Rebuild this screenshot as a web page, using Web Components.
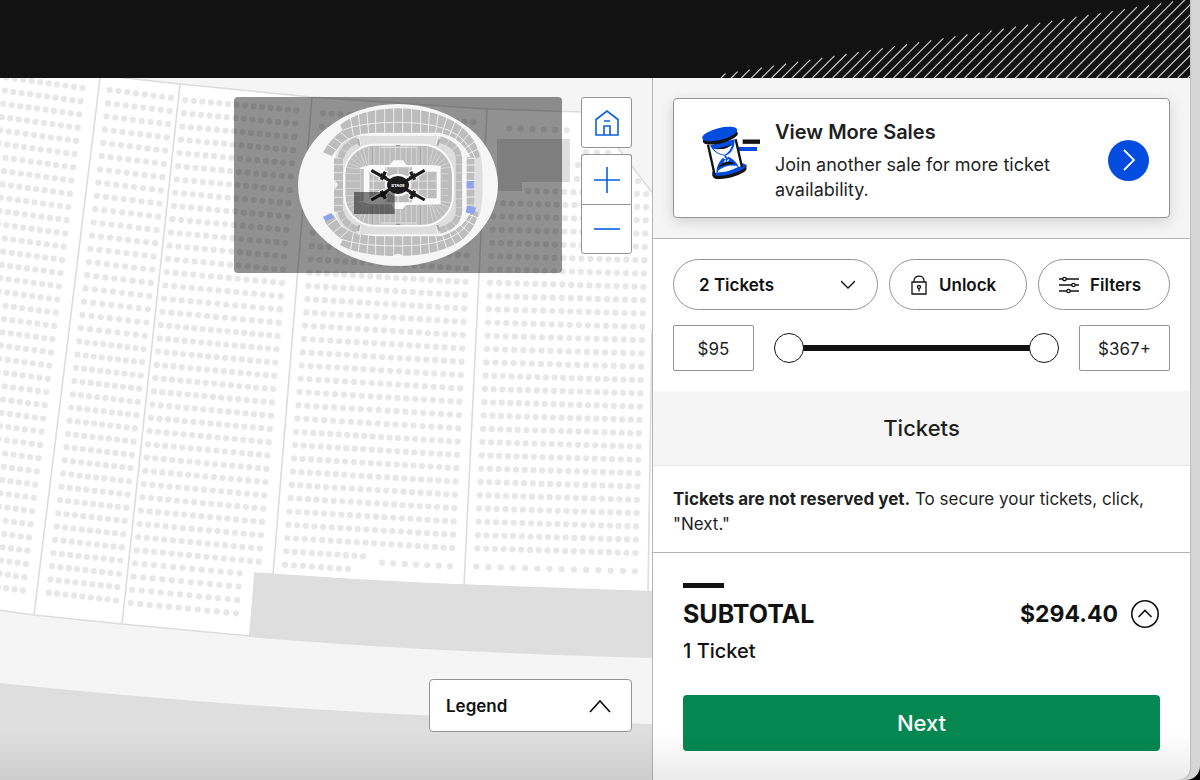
<!DOCTYPE html>
<html lang="en">
<head>
<meta charset="utf-8">
<meta name="viewport" content="width=device-width, initial-scale=1">
<title>Tickets</title>
<style>
    html {
        background: #000;
    }

    body {
        margin: 0;
        font-family: Inter, "Liberation Sans", sans-serif;
        color: #1f1f1f;
        --ink: #121212;
        --line: #949494;
        --blue: #024ddf;
        --green: #048851;
        --soft: #f5f5f5;
    }
</style>
</head>
<body>
<ticket-page>
    <page-banner slot="banner"></page-banner>
    <seat-map slot="map">
        <mini-map slot="overview"></mini-map>
        <zoom-controls slot="controls"></zoom-controls>
        <legend-toggle slot="legend">Legend</legend-toggle>
    </seat-map>
    <promo-card slot="side" heading="View More Sales">Join another sale for more ticket availability.</promo-card>
    <filter-bar slot="side"></filter-bar>
    <section-title slot="side">Tickets</section-title>
    <reserve-notice slot="side"><strong>Tickets are not reserved yet.</strong> To secure your tickets, click, "Next."</reserve-notice>
    <order-summary slot="side" total="$294.40" count="1 Ticket"></order-summary>
</ticket-page>

<script>
// Shared base: attaches an open shadow root and fills it
class BaseElement extends HTMLElement {
    constructor() {
        super();
        this.attachShadow({ mode: 'open' });
    }

    connectedCallback() {
        this.shadowRoot.innerHTML = `
            <style>
                :host { display: block; box-sizing: border-box; }
                *, *::before { box-sizing: border-box; }
                button, input, select { font: inherit; color: inherit; margin: 0; }
                button { cursor: pointer; }
                svg { display: block; }
            </style>
            ${this.render()}
        `;
    }
}

// Page frame: banner on top, map and side panel below
class TicketPage extends BaseElement {
    render() {
        return `
            <style>
                :host {
                    min-height: 100vh;
                    padding-right: 10px;
                    background: #d6d6d6;
                    border-radius: 0 0 14px 0;
                    display: flex;
                    overflow: hidden;
                }
                .window {
                    flex: 1;
                    display: flex;
                    flex-direction: column;
                    position: relative;
                    background: #fff;
                    border-radius: 0 0 12px 0;
                    overflow: hidden;
                    box-shadow: 0 0 2px #888;
                }
                .window::after {
                    content: "";
                    position: absolute;
                    inset: auto 0 0 0;
                    height: 48px;
                    background: linear-gradient(transparent, rgba(0, 0, 0, .08));
                    pointer-events: none;
                }
                main {
                    flex: 1;
                    display: grid;
                    grid-template-columns: minmax(0, 1fr) 537px;
                }
                .map { display: grid; border-right: 1px solid #b4b4b4; }
                aside { display: flex; flex-direction: column; }
            </style>
            <div class="window">
                <slot name="banner"></slot>
                <main>
                    <div class="map"><slot name="map"></slot></div>
                    <aside><slot name="side"></slot></aside>
                </main>
            </div>
        `;
    }
}
customElements.define('ticket-page', TicketPage);

// Dark banner with a wedge of diagonal lines
class PageBanner extends BaseElement {
    render() {
        let d = '';
        for (let i = 0; i < 48; i++) {
            const x = 11 + i * 10.15;
            const len = 4.5 + i * 1.95;
            d += `M${x} 78l${len} ${-len}`;
        }
        return `
            <style>
                :host { background: var(--ink); height: 78px; }
                svg { margin-left: auto; }
            </style>
            <svg width="480" height="78" viewBox="0 0 480 78" aria-hidden="true">
                <path d="${d}" stroke="#c8c8c8" stroke-width="1.2"/>
            </svg>
        `;
    }
}
customElements.define('page-banner', PageBanner);

// Seat blocks: first and last row as [left x, y, right x, y], seats per row at both ends
const BLOCKS = [
    { first: [-10.6, 75, 82.4, 88], last: [-68, 578, 22.7, 590.3], rows: 39, seats: [12, 12] },
    { first: [109.7, 90, 171, 97.7], last: [48.7, 592.7, 116, 600.3], rows: 39, seats: [8, 9] },
    { first: [185.3, 100, 296.3, 110.3], last: [136.7, 550.3, 258.7, 561.7], rows: 35, seats: [14, 15] },
    { first: [135, 563.3, 239.7, 573.3], last: [130.7, 603, 236, 613.3], rows: 4, seats: [12, 12] },
    { first: [323, 113.3, 473.3, 122.3], last: [287.3, 538, 452.3, 548], rows: 33, seats: [18, 20] },
    { first: [286.3, 551.3, 363, 556.3], last: [285, 564.7, 348, 569], rows: 2, seats: [10, 8] },
    { first: [382, 562.7, 450, 566.3], last: [382, 562.7, 450, 566.3], rows: 1, seats: [7, 7] },
    { first: [509.3, 128.3, 566.7, 130.3], last: [509.3, 128.3, 566.7, 130.3], rows: 1, seats: [6, 6] },
    { first: [586, 152, 608, 153], last: [578, 165, 622, 167], rows: 2, seats: [3, 6] },
    { first: [577, 179, 638, 181], last: [528, 191, 646, 194], rows: 2, seats: [8, 14] },
    { first: [494, 203, 646, 207], last: [477.3, 548.3, 635.3, 553], rows: 27, seats: [18, 19] },
    { first: [476.3, 566.7, 635, 571.3], last: [476.3, 566.7, 635, 571.3], rows: 1, seats: [14, 14] }
];

function drawSeats() {
    const mix = (a, b, t) => a + (b - a) * t;
    let out = '';
    BLOCKS.forEach(({ first, last, rows, seats }) => {
        for (let r = 0; r < rows; r++) {
            const t = rows > 1 ? r / (rows - 1) : 0;
            const [x1, y1, x2, y2] = first.map((v, i) => mix(v, last[i], t));
            const n = Math.round(mix(seats[0], seats[1], t));
            for (let s = 0; s < n; s++) {
                const k = s / (n - 1);
                out += `<circle cx="${mix(x1, x2, k).toFixed(1)}" cy="${mix(y1, y2, k).toFixed(1)}" r="3.1"/>`;
            }
        }
    });
    return out;
}

// Zoomed-in map with its floating controls
class SeatMap extends BaseElement {
    render() {
        return `
            <style>
                :host { position: relative; overflow: hidden; background: var(--soft); }
                .canvas { position: absolute; inset: 0; width: 100%; height: 100%; }
                .tools {
                    position: absolute;
                    top: 19px;
                    right: 20px;
                    display: flex;
                    align-items: flex-start;
                    gap: 19px;
                }
                .legend { position: absolute; right: 20px; bottom: 48px; }
            </style>
            <svg class="canvas" viewBox="0 78 652 702" preserveAspectRatio="xMinYMin slice" role="img" aria-label="Seat map">
                <path d="M-9 60L125 78L180 84L311 97L487 109L583 112L600 120L618 148L660 203V592L400 583L255 573L250 636L122 624L34 615L-9 609Z" fill="#fff" stroke="#dcdcdc" stroke-width="1.6"/>
                <path d="M100 78L34 615M180 84L122 624M312 97L273 574M487 109L464 586M652 330L648 592" stroke="#dcdcdc" stroke-width="1.6" fill="none"/>
                <path d="M255 573Q400 583 653 592V658Q430 652 249 637Z" fill="#dedede"/>
                <path d="M0 683Q300 715 653 724V780H0Z" fill="#dedede"/>
                <path d="M497 139H570V182H522V191H497Z" fill="#dedede"/>
                <g fill="#e7e7e7">${drawSeats()}</g>
            </svg>
            <div class="tools">
                <slot name="overview"></slot>
                <slot name="controls"></slot>
            </div>
            <div class="legend"><slot name="legend"></slot></div>
        `;
    }
}
customElements.define('seat-map', SeatMap);

// Overview of the whole stadium, with the visible area marked
class MiniMap extends BaseElement {
    // lines between the lower-bowl sections, from the floor out to the rim
    sections() {
        let d = '';
        for (let x = 236; x <= 412; x += 16) {
            d += `M${x} 145V212M${x} 325V395`;
        }
        for (let i = 0; i < 6; i++) {
            const a = i * 15;
            d += `M${232 - i * 4} ${212 + i * 2}L${215 - i * 13} ${140 + a}`;
            d += `M${232 - i * 4} ${328 - i * 2}L${215 - i * 13} ${400 - a}`;
            d += `M${418 + i * 5} ${212 + i * 2}L${434 + i * 12} ${140 + a}`;
            d += `M${418 + i * 5} ${328 - i * 2}L${434 + i * 12} ${400 - a}`;
        }
        for (let y = 236; y <= 310; y += 22) {
            d += `M160 ${y}H212M455 ${y}H490`;
        }
        return d;
    }

    render() {
        return `
            <style>
                :host { width: 328px; height: 176px; background: rgba(0, 0, 0, .43); border-radius: 4px; }
                text { font: 800 12px Inter, sans-serif; fill: #fff; }
            </style>
            <svg width="328" height="176" viewBox="-168 6 984 528" fill="none" role="img" aria-label="Stadium overview">
                <defs><clipPath id="bowl"><rect x="166" y="153" width="319" height="236" rx="88"/></clipPath></defs>
                <ellipse cx="324" cy="270" rx="300" ry="243" fill="#f6f6f6"/>
                <path d="M553 172H570Q578 200 578 270T566 366H553Z" fill="#dedede"/>
                <path d="M150 90Q210 42 324 40Q450 42 520 100Q560 136 570 185L546 196Q520 130 450 113H260Q190 113 155 145L125 183L99 172Q124 128 158 106Z" fill="#bdbdbd"/>
                <path d="M150 450Q210 483 324 483Q450 483 520 432Q556 400 566 352L546 344Q520 405 450 424H260Q190 420 155 395L128 358L104 380Q128 415 158 434Z" fill="#bdbdbd"/>
                <path d="M530 186H553V354H530Z" fill="#bdbdbd"/>
                <g stroke="#f6f6f6" stroke-width="2.500">
                    <path d="M158 106Q210 82 324 82Q450 82 505 122Q540 150 556 190M158 434Q210 453 324 453Q450 453 505 415Q540 385 556 345"/>
                    <path d="M204 50L212 118M230 42L236 116M257 38V116M284 36V116M311 36V116M338 36V116M365 36V116M392 38V116M419 42L414 116M446 50L436 118M472 64L454 124M496 78L474 132M518 96L490 142M538 116L504 154M556 138L516 168M568 160L524 182"/>
                    <path d="M180 60L190 122M126 124L162 150M112 148L142 168M142 104L178 134"/>
                    <path d="M204 478L212 418M230 484L236 420M257 486V420M284 488V420M311 488V420M338 488V420M365 488V420M392 486V420M419 484L414 420M446 476L436 418M472 464L454 412M496 450L474 404M518 434L490 396M538 414L504 384M556 392L516 370M568 370L524 354"/>
                    <path d="M180 474L190 414M126 416L162 388M112 392L142 370M142 436L178 404"/>
                    <path d="M526 190H556M526 210H556M526 232H556M526 256H556M526 282H556M526 306H556M526 330H556"/>
                </g>
                <rect x="129" y="116" width="396" height="307" rx="130" fill="#fafafa"/>
                <path d="M132 190H160V350H132Z" fill="#bdbdbd"/>
                <path d="M130 209H160M130 233H160M130 257H160M130 283H160M130 307H160M130 331H160" stroke="#f6f6f6" stroke-width="2"/>
                <path d="M136 188Q146 134 206 122H442Q504 134 516 190V350Q504 406 442 418H206Q146 406 136 352H162V188Z" fill="#dedede"/>
                <path d="M202 136C176 145 158 162 152 190M152 350C158 376 176 394 202 404M450 134C490 145 507 165 507 195V345C507 375 490 395 450 406" stroke="#bdbdbd" stroke-width="19" stroke-dasharray="24 2"/>
                <path d="M206 119L212 150M444 119L438 150M206 421L212 392M444 421L438 392" stroke="#f6f6f6" stroke-width="3"/>
                <path d="M204 132L208 152M448 132L442 152M204 408L208 390M448 408L442 390" stroke="#aaa" stroke-width="6"/>
                <rect x="163" y="149" width="326" height="243" rx="92" fill="#bdbdbd" stroke="#fbfbfb" stroke-width="6"/>
                <g clip-path="url(#bowl)">
                    <path d="${this.sections()}" stroke="#e9e9e9" stroke-width="1.6"/>
                    <path d="M272 157H378M272 384H378" stroke="#e4e4e4" stroke-width="3"/>
                    <path d="M248 152V208M392 152V208M248 332V390M392 332V390" stroke="#a9a9a9" stroke-width="3"/>
                </g>
                <path d="M317 152H331M317 388H331" stroke="#8d8d8d" stroke-width="3"/>
                <path d="M210 218L240 210H300L310 196H340L348 210H420L452 212V328L348 330L338 342H312L304 328H240L210 318Z" fill="#fafafa"/>
                <path d="M211 222H221V318H211ZM474 234H483V306H474Z" fill="#bdbdbd"/>
                <path d="M238 232H286V217H366V230H440V310H366V322H286V308H238Z" fill="#bdbdbd"/>
                <path d="M250 232V308M290 217V322M324 217V322M358 217V322M386 230V310M412 230V310M238 258H440M238 283H440" stroke="#f6f6f6" stroke-width="2"/>
                <g stroke="#fafafa" stroke-width="17">
                    <path d="M243 226L300 256M404 226L346 256M243 315L300 284M404 315L346 284"/>
                    <path d="M286 226L272 256M362 226L376 256M286 315L272 285M362 315L376 285"/>
                </g>
                <ellipse cx="324" cy="270" rx="40" ry="34" fill="#fafafa"/>
                <g stroke="#1c1c1c">
                    <path d="M244 226L304 260M404 226L344 260M244 315L304 281M404 315L344 281" stroke-width="9"/>
                    <path d="M286 230L274 254M362 230L374 254M286 311L274 287M362 311L374 287" stroke-width="10"/>
                    <path d="M272 237L290 249M376 237L358 249M272 304L290 292M376 304L358 292" stroke-width="8"/>
                </g>
                <ellipse cx="324" cy="270" rx="33" ry="27" fill="#1c1c1c"/>
                <text x="324" y="275" text-anchor="middle">STAGE</text>
                <g fill="#8ea2ee">
                    <path d="M530 258H552L549 269L553 280H530Z"/>
                    <path d="M532 332L558 338L552 359L527 352Z"/>
                    <path d="M99 365L124 354L131 368L106 379Z"/>
                </g>
                <path d="M134 258Q150 270 134 280ZM310 483Q324 472 340 483Z" fill="#ececec" stroke="#fff" stroke-width="2"/>
                <rect x="192" y="291" width="122" height="66" fill="#000" fill-opacity=".48"/>
            </svg>
        `;
    }
}
customElements.define('mini-map', MiniMap);

// Home, zoom in, zoom out
class ZoomControls extends BaseElement {
    render() {
        return `
            <style>
                :host { display: flex; flex-direction: column; gap: 6px; }
                button {
                    width: 51px;
                    height: 51px;
                    padding: 0;
                    display: grid;
                    place-items: center;
                    background: #fff;
                    border: 1px solid var(--line);
                    border-radius: 3px;
                }
                .pair button { height: 50px; }
                .pair button:first-child { border-radius: 3px 3px 0 0; border-bottom: 0; }
                .pair button:last-child { border-radius: 0 0 3px 3px; }
                svg { stroke: #0a5fdc; stroke-width: 1.6; fill: none; }
            </style>
            <button aria-label="Reset map">
                <svg width="26" height="28" viewBox="0 0 26 28"><path d="M2 10.500L13 2L24 10.500V26H2ZM10 26V17H16V26M10 12H16"/></svg>
            </button>
            <div class="pair">
                <button aria-label="Zoom in"><svg width="26" height="26" viewBox="0 0 26 26"><path d="M0 13H26M13 0V26"/></svg></button>
                <button aria-label="Zoom out"><svg width="26" height="26" viewBox="0 0 26 26"><path d="M0 13H26"/></svg></button>
            </div>
        `;
    }
}
customElements.define('zoom-controls', ZoomControls);

class LegendToggle extends BaseElement {
    render() {
        return `
            <style>
                button {
                    width: 203px;
                    height: 53px;
                    padding: 0 20px 0 16px;
                    display: flex;
                    align-items: center;
                    justify-content: space-between;
                    background: #fff;
                    color: var(--ink);
                    border: 1px solid var(--line);
                    border-radius: 4px;
                    font-size: 17px;
                    font-weight: 600;
                }
            </style>
            <button aria-expanded="false">
                <slot></slot>
                <svg width="22" height="14" viewBox="0 0 22 14" fill="none" stroke="#121212" stroke-width="1.700"><path d="M1 13L11 2L21 13"/></svg>
            </button>
        `;
    }
}
customElements.define('legend-toggle', LegendToggle);

// Promo card linking to the other sales
class PromoCard extends BaseElement {
    render() {
        return `
            <style>
                :host { padding: 20px; background: var(--soft); border-bottom: 1px solid #b4b4b4; }
                .card {
                    min-height: 120px;
                    padding: 18px 20px 14px 28px;
                    display: flex;
                    align-items: center;
                    gap: 15px;
                    background: #fff;
                    border: 1px solid var(--line);
                    border-radius: 4px;
                    box-shadow: 0 4px 14px rgba(0, 0, 0, .14);
                }
                .text { flex: 1; }
                h2 { margin: 0 0 6px; font-size: 20px; line-height: 28px; font-weight: 600; }
                p { margin: 0; font-size: 18px; line-height: 25px; max-width: 290px; }
                a {
                    width: 41px;
                    height: 41px;
                    display: grid;
                    place-items: center;
                    border-radius: 50%;
                    background: var(--blue);
                }
            </style>
            <div class="card">
                <svg width="58" height="76" viewBox="18 6 174 228" aria-hidden="true">
                    <path d="M140 65H192" stroke="#121212" stroke-width="13"/>
                    <path d="M122 87H183" stroke="#024ddf" stroke-width="12"/>
                    <ellipse cx="101" cy="157" rx="52" ry="16" transform="rotate(-14 101 157)" fill="#121212"/>
                    <path d="M49 156V166L60 178L150 150L152 134Z" fill="#121212"/>
                    <ellipse cx="99" cy="148" rx="52" ry="15" transform="rotate(-14 99 148)" fill="#024ddf"/>
                    <path d="M38 78L118 60L138 138L56 160Z" fill="#fff"/>
                    <path d="M42 76L116 58C116 86 106 100 88 108C66 104 52 96 42 76Z" fill="#024ddf"/>
                    <path d="M52 86Q80 92 108 76Q102 96 87 104Q66 102 52 86Z" fill="#fff"/>
                    <path d="M88 107C74 118 62 132 61 158L128 141C120 122 106 112 88 107Z" fill="#024ddf"/>
                    <path d="M66 152Q92 132 124 138L124 142Q96 158 66 157Z" fill="#fff"/>
                    <path d="M64 143Q80 126 94 126Q108 124 117 131Q88 132 64 143Z" fill="#121212"/>
                    <path d="M58 84Q80 86 106 72Q98 84 82 87Q68 88 58 84Z" fill="#121212"/>
                    <path d="M82 112L90 117M90 122L84 126M96 112L92 106M98 118L94 124" stroke="#fff" stroke-width="4"/>
                    <path d="M36 74L56 164M119 58L138 142" stroke="#121212" stroke-width="7"/>
                    <ellipse cx="73" cy="52" rx="54" ry="18" transform="rotate(-14 73 52)" fill="#121212"/>
                    <ellipse cx="71" cy="42" rx="54" ry="18" transform="rotate(-14 71 42)" fill="#024ddf"/>
                </svg>
                <div class="text">
                    <h2>${this.getAttribute('heading')}</h2>
                    <p><slot></slot></p>
                </div>
                <a href="#sales" aria-label="View more sales">
                    <svg width="14" height="22" viewBox="0 0 14 22" fill="none" stroke="#fff" stroke-width="1.800"><path d="M2 1L12 11L2 21"/></svg>
                </a>
            </div>
        `;
    }
}
customElements.define('promo-card', PromoCard);

// Quantity, unlock, filters and price range
class FilterBar extends BaseElement {
    render() {
        return `
            <style>
                :host { padding: 20px; }
                .row { display: flex; align-items: center; }
                .pills { gap: 11px; margin-bottom: 15px; }
                .pill {
                    height: 51px;
                    border: 1px solid var(--line);
                    border-radius: 26px;
                    background: #fff;
                    color: var(--ink);
                    font-size: 17px;
                    font-weight: 600;
                    display: flex;
                    align-items: center;
                }
                .quantity { flex: 1; display: grid; align-items: center; }
                .quantity select {
                    grid-area: 1 / 1;
                    appearance: none;
                    height: 100%;
                    padding: 0 25px;
                    border: 0;
                    border-radius: inherit;
                    background: none;
                }
                .quantity svg { grid-area: 1 / 1; justify-self: end; margin-right: 22px; pointer-events: none; }
                button.pill { gap: 11px; padding: 0 20px; }
                .unlock { width: 138px; }
                .filters { width: 132px; }
                svg { fill: none; stroke: #121212; stroke-width: 1.3; }
                .range { gap: 20px; }
                .price {
                    height: 46px;
                    padding: 2px 0 0;
                    text-align: center;
                    border: 1px solid var(--line);
                    border-radius: 2px;
                    font-size: 17px;
                }
                .min { width: 81px; }
                .max { width: 91px; }
                .slider {
                    flex: 1;
                    min-width: 0;
                    display: grid;
                    align-items: center;
                }
                .slider::before { content: ""; grid-area: 1 / 1; height: 6px; margin: 0 15px; background: var(--ink); }
                .slider input {
                    grid-area: 1 / 1;
                    appearance: none;
                    width: 100%;
                    height: 30px;
                    background: none;
                    pointer-events: none;
                    z-index: 1;
                }
                .slider input::-webkit-slider-thumb {
                    appearance: none;
                    box-sizing: border-box;
                    width: 30px;
                    height: 30px;
                    border: 1px solid var(--ink);
                    border-radius: 50%;
                    background: #fff;
                    pointer-events: auto;
                }
            </style>
            <div class="row pills">
                <div class="pill quantity">
                    <select aria-label="Number of tickets">
                        <option>1 Ticket</option>
                        <option selected>2 Tickets</option>
                        <option>3 Tickets</option>
                    </select>
                    <svg width="14" height="9" viewBox="0 0 14 9"><path d="M0 1L7 8L14 1"/></svg>
                </div>
                <button class="pill unlock">
                    <svg width="18" height="20" viewBox="0 0 18 20"><path d="M2 7H16V19H2ZM4 7V6C4 -.5 14 -.5 14 6V7M9 13.500V16.500"/><circle cx="9" cy="12" r="1.500"/></svg>
                    Unlock
                </button>
                <button class="pill filters">
                    <svg width="20" height="18" viewBox="0 0 20 18"><path d="M0 3H4M7 3H20M0 9H13M16 9H20M0 15H8M11 15H20"/><circle cx="5.500" cy="3" r="1.700"/><circle cx="14.500" cy="9" r="1.700"/><circle cx="9.500" cy="15" r="1.700"/></svg>
                    Filters
                </button>
            </div>
            <div class="row range">
                <input class="price min" type="text" value="$95" aria-label="Minimum price">
                <div class="slider">
                    <input type="range" min="95" max="367" value="95" aria-label="Minimum price slider">
                    <input type="range" min="95" max="367" value="367" aria-label="Maximum price slider">
                </div>
                <input class="price max" type="text" value="$367+" aria-label="Maximum price">
            </div>
        `;
    }
}
customElements.define('filter-bar', FilterBar);

class SectionTitle extends BaseElement {
    render() {
        return `
            <style>
                :host { background: var(--soft); border-bottom: 1px solid #e6e6e6; padding: 22px 20px; }
                h1 { margin: 0; font-size: 22px; line-height: 30px; font-weight: 500; text-align: center; }
            </style>
            <h1><slot></slot></h1>
        `;
    }
}
customElements.define('section-title', SectionTitle);

class ReserveNotice extends BaseElement {
    render() {
        return `
            <style>
                :host { padding: 21px 20px 15px; border-bottom: 1px solid #b4b4b4; }
                p { margin: 0; font-size: 17px; line-height: 25px; }
                ::slotted(strong) { font-weight: 700; }
            </style>
            <p><slot></slot></p>
        `;
    }
}
customElements.define('reserve-notice', ReserveNotice);

// Subtotal and the button to move on
class OrderSummary extends BaseElement {
    render() {
        return `
            <style>
                :host { padding: 30px 30px 28px; color: var(--ink); }
                .mark { width: 41px; height: 5px; background: var(--ink); margin-bottom: 8px; }
                .total { display: flex; align-items: center; gap: 12px; font-size: 25px; line-height: 36px; font-weight: 700; }
                .total span:first-child { flex: 1; }
                .price { font-size: 23px; }
                .toggle { padding: 0; border: 0; border-radius: 50%; background: none; }
                .count { margin: 5px 0 30px; font-size: 20px; line-height: 28px; font-weight: 500; }
                .next {
                    width: 100%;
                    height: 56px;
                    border: 0;
                    border-radius: 4px;
                    background: var(--green);
                    color: #fff;
                    font-size: 22px;
                    font-weight: 500;
                }
            </style>
            <div class="mark"></div>
            <div class="total">
                <span>SUBTOTAL</span>
                <span class="price">${this.getAttribute('total')}</span>
                <button class="toggle" aria-label="Show price details">
                    <svg width="30" height="30" viewBox="0 0 30 30" fill="none" stroke="#121212" stroke-width="1.600"><circle cx="15" cy="15" r="13.200"/><path d="M8.500 18L15 11.500L21.500 18"/></svg>
                </button>
            </div>
            <p class="count">${this.getAttribute('count')}</p>
            <button class="next">Next</button>
        `;
    }
}
customElements.define('order-summary', OrderSummary);
</script>
</body>
</html>
